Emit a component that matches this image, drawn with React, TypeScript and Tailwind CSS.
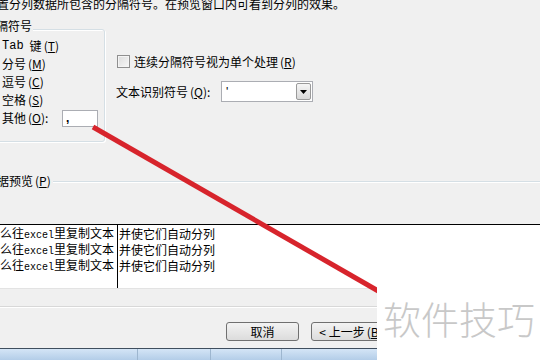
import React from "react";

const rowCls = "flex h-[18px] items-center whitespace-nowrap pl-[25px]";

function Key({ k }: { k: string }) {
  return (
    <span className="ml-[2px]">
      (<span className="underline">{k}</span>)
    </span>
  );
}

export default function App() {
  return (
    <div className="relative h-[360px] w-[540px] overflow-hidden bg-[#f0f0f0] font-['Noto_Sans_CJK_SC',sans-serif] text-[12px] leading-[12px] text-black">
      {/* instruction line, cut at the top */}
      <p className="-ml-[3px] -mt-[2px] h-[12px] whitespace-nowrap">
        置分列数据所包含的分隔符号。在预览窗口内可看到分列的效果。
      </p>

      {/* delimiters + options */}
      <div className="mt-[19px] flex h-[113px]">
        <div className="relative -ml-[24px] w-[129px] rounded-[3px] border border-[#d5dfe5] pt-[7px] shadow-[inset_1px_1px_0_#fff,1px_1px_0_#fff]">
          <span className="absolute -top-[10px] left-[6px] bg-[#f0f0f0] px-[1px] whitespace-nowrap">
            分隔符号
          </span>
          <div className={rowCls}>
            <span className="font-['Liberation_Mono',monospace]">Tab</span>
            <span className="ml-[6px]">键</span>
            <Key k="T" />
          </div>
          <div className={rowCls}>
            分号<Key k="M" />
          </div>
          <div className={rowCls}>
            逗号<Key k="C" />
          </div>
          <div className={rowCls}>
            空格<Key k="S" />
          </div>
          <div className={rowCls}>
            <span className="w-[60px]">
              其他<Key k="O" />:
            </span>
            <div className="flex h-[17px] w-[36px] items-center border border-[#abadb3] bg-white pl-[3px] font-['Liberation_Sans',sans-serif] font-bold">
              ,
            </div>
          </div>
        </div>

        <div className="ml-[12px] flex flex-col pt-[26px]">
          <div className="flex h-[13px] items-center gap-[4px] whitespace-nowrap">
            <span className="h-[13px] w-[13px] border border-[#8f8f8f] bg-gradient-to-br from-[#dcdcdc] to-[#f7f7f7] shadow-[inset_0_0_0_1px_#f4f4f4]" />
            <span>
              连续分隔符号视为单个处理<Key k="R" />
            </span>
          </div>
          <div className="-ml-[1px] mt-[13px] flex h-[21px] items-center whitespace-nowrap">
            <span className="w-[105px]">
              文本识别符号<Key k="Q" />:
            </span>
            <div className="flex h-[21px] w-[92px] items-center justify-between border border-[#abadb3] bg-white">
              <span className="pl-[4px] font-['Liberation_Sans',sans-serif]">'</span>
              <span className="mr-[1px] flex h-[17px] w-[15px] items-center justify-center rounded-[2px] border border-[#9a9a9a] bg-gradient-to-b from-[#f6f6f6] to-[#d8d8d8]">
                <svg width="7" height="4" viewBox="0 0 7 4">
                  <path d="M0 0h7L3.5 4z" fill="#000" />
                </svg>
              </span>
            </div>
          </div>
        </div>
      </div>

      {/* data preview */}
      <div className="relative -ml-[24px] mt-[39px] w-[600px] border-t border-[#d5dfe5] shadow-[inset_0_1px_0_#fff]">
        <span className="absolute -top-[7px] left-[9px] bg-[#f0f0f0] pr-[2px] whitespace-nowrap">
          数据预览<Key k="P" />
        </span>
        <div className="h-[42px]" />
        <div className="flex h-[65px] border-t border-b border-t-black border-b-[#e3e3e3] bg-white">
          <div className="w-[142px] border-r border-black pl-[12px] pt-[1px]">
            {[0, 1, 2].map((i) => (
              <div key={i} className="flex h-[16px] items-center whitespace-nowrap">
                <span>
                  怎么往<span className="font-['Liberation_Mono',monospace] text-[10px]">excel</span>里复制文本
                </span>
              </div>
            ))}
          </div>
          <div className="pl-[1px] pt-[1px]">
            {[0, 1, 2].map((i) => (
              <div key={i} className="flex h-[16px] items-center whitespace-nowrap">
                并使它们自动分列
              </div>
            ))}
          </div>
        </div>
      </div>

      {/* separator */}
      <div className="mt-[17px] h-px bg-[#d8d8d8]" />
      <div className="h-px bg-white" />

      {/* buttons */}
      <div className="mt-[14px] flex h-[19px] gap-[12px] pl-[226px]">
        <button className="h-[19px] w-[73px] rounded-[3px] border border-[#707070] bg-gradient-to-b from-[#f3f3f3] to-[#dcdcdc] text-[12px] leading-[12px]">
          取消
        </button>
        <button className="h-[19px] w-[80px] whitespace-nowrap rounded-[3px] border border-[#707070] bg-gradient-to-b from-[#f3f3f3] to-[#dcdcdc] text-[12px] leading-[12px]">
          &lt; 上一步<Key k="B" />
        </button>
      </div>

      {/* taskbar strip */}
      <div className="mt-[7px] flex h-[12px] border-t border-[#3f4e5e] bg-gradient-to-b from-[#d4e5f6] to-[#b3cde8]">
        <div className="w-[138px] border-r border-[#9db6cf]" />
        <div className="w-[73px] border-r border-[#9db6cf]" />
        <div className="w-[71px] border-r border-[#9db6cf]" />
      </div>

      {/* red annotation line */}
      <svg className="pointer-events-none absolute inset-0" width="540" height="360">
        <line x1="93" y1="127" x2="380" y2="292" stroke="#d7242c" strokeWidth="5" />
      </svg>

      {/* watermark */}
      <div className="absolute bottom-0 left-[377px] right-0 top-[225px] bg-white pl-[6px] pt-[74px]">
        <span className="whitespace-nowrap text-[38px] leading-[38px] text-[#c8c8c8] font-light">
          软件技巧
        </span>
      </div>
    </div>
  );
}
